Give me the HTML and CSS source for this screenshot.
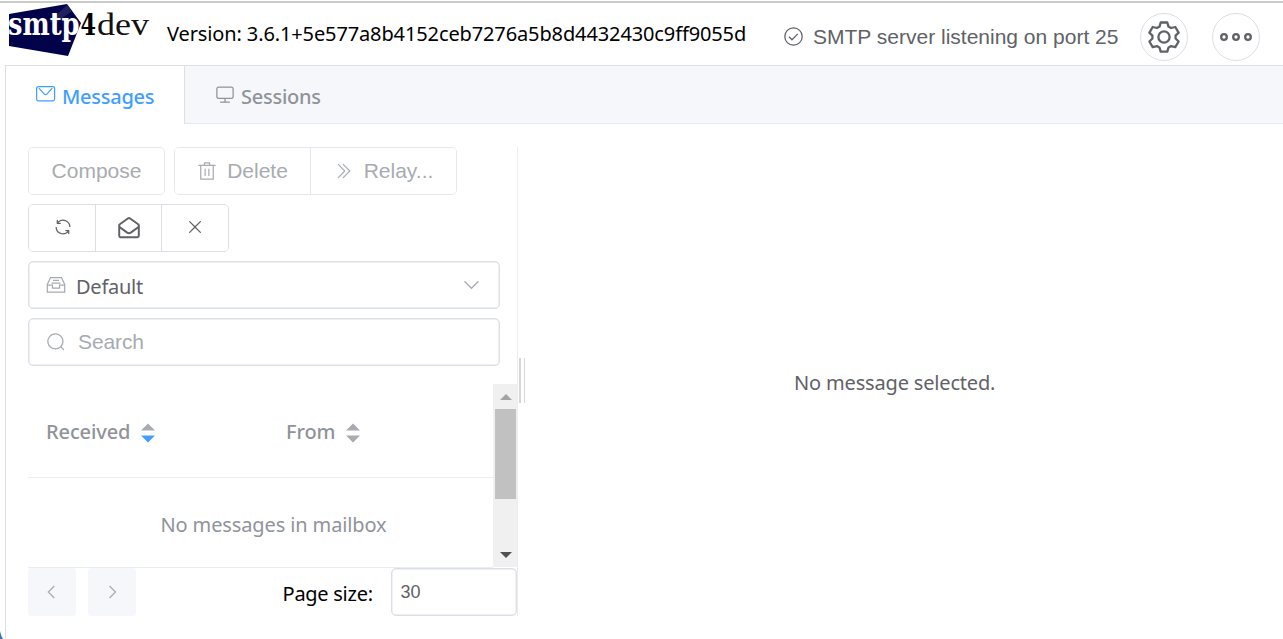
FILE: index.html
```html
<!DOCTYPE html>
<html lang="en">
<head>
<meta charset="utf-8">
<title>smtp4dev</title>
<link rel="stylesheet" href="styles.css">
</head>
<body>
<div class="app">
  <header class="header">
    <svg class="logo" viewBox="0 0 142 54" role="img" aria-label="smtp4dev">
      <path fill="#02024a" d="M1 10 59 0 73 19 60 52 1 42z"/>
      <path fill="#20205f" d="M41 18 59 1 64 7 49 18z"/>
      <text class="logo-smtp" x="0" y="30.500" textLength="71.500" lengthAdjust="spacingAndGlyphs">smtp</text>
      <text class="logo-four" x="72.500" y="30.500" textLength="15.500" lengthAdjust="spacingAndGlyphs">4</text>
      <text class="logo-dev" x="89" y="30.500" textLength="52" lengthAdjust="spacingAndGlyphs">dev</text>
    </svg>
    <span class="version"><span class="t-version">Version: 3.6.1+5e577a8b4152ceb7276a5b8d4432430c9ff9055d</span></span>
    <div class="status">
      <svg class="ic20" viewBox="0 0 20 20"><circle cx="9.500" cy="9.500" r="8.700"/><path d="m5 9.800 3 3 5.800-5.900"/></svg>
      <span>SMTP server listening on port 25</span>
    </div>
    <button class="round settings" aria-label="Settings">
      <svg width="32" height="32" viewBox="0 0 32 32"><path stroke-linejoin="round" d="M12.700 1.500h6.600l1.100 3.900 2.700 1.600 4.200-1 3.300 5.600-3 3v2.900l3 3-3.300 5.600-4.200-1-2.700 1.600-1.100 3.900h-6.600l-1.100-3.900-2.700-1.600-4.200 1-3.300-5.600 3-3v-2.900l-3-3L4.700 6l4.200 1 2.700-1.600z"/><circle cx="16" cy="16" r="5.600"/></svg>
    </button>
    <button class="round" aria-label="More">
      <svg width="34" height="12" viewBox="0 0 34 12"><circle cx="5" cy="6" r="2.800"/><circle cx="17" cy="6" r="2.800"/><circle cx="29" cy="6" r="2.800"/></svg>
    </button>
  </header>
  <main class="panel">
    <nav class="tabs">
      <div class="tab active">
        <svg class="ic20" viewBox="0 0 20 20"><rect x=".6" y="2.600" width="18" height="14.200" rx="1.800"/><path d="m2.900 4.200 5.200 5.700q1.500 1.500 3 0l5.200-5.700"/></svg>
        <span class="t-messages">Messages</span>
      </div>
      <div class="tab">
        <svg class="ic20 solid" viewBox="0 0 1024 1024"><path d="M544 768v128h192a32 32 0 1 1 0 64H288a32 32 0 1 1 0-64h192V768H192A128 128 0 0 1 64 640V256a128 128 0 0 1 128-128h640a128 128 0 0 1 128 128v384a128 128 0 0 1-128 128H544zM192 192a64 64 0 0 0-64 64v384a64 64 0 0 0 64 64h640a64 64 0 0 0 64-64V256a64 64 0 0 0-64-64H192z"/></svg>
        <span class="t-sessions">Sessions</span>
      </div>
    </nav>
    <div class="split">
      <section class="list-pane">
        <div class="toolbar">
          <div class="group disabled"><button class="btn compose">Compose</button></div>
          <div class="group disabled">
            <button class="btn delete"><svg class="ic20 solid" viewBox="0 0 1024 1024"><path d="M160 256H96a32 32 0 0 1 0-64h256V95.936a32 32 0 0 1 32-32h256a32 32 0 0 1 32 32V192h256a32 32 0 1 1 0 64h-64v672a32 32 0 0 1-32 32H192a32 32 0 0 1-32-32V256zm448-64v-64H416v64h192zM224 896h576V256H224v640zm192-128a32 32 0 0 1-32-32V416a32 32 0 0 1 64 0v320a32 32 0 0 1-32 32zm192 0a32 32 0 0 1-32-32V416a32 32 0 0 1 64 0v320a32 32 0 0 1-32 32z"/></svg><span>Delete</span></button>
            <button class="btn relay"><svg class="ic20 solid" viewBox="0 0 1024 1024"><path d="M452.864 149.312a29.12 29.12 0 0 1 41.728.064L826.24 489.664a32 32 0 0 1 0 44.672L494.592 874.624a29.12 29.12 0 0 1-41.728 0 30.592 30.592 0 0 1 0-42.752L764.736 512 452.864 192a30.592 30.592 0 0 1 0-42.688zm-256 0a29.12 29.12 0 0 1 41.728.064L570.24 489.664a32 32 0 0 1 0 44.672L238.592 874.624a29.12 29.12 0 0 1-41.728 0 30.592 30.592 0 0 1 0-42.752L508.736 512 196.864 192a30.592 30.592 0 0 1 0-42.688z"/></svg><span>Relay...</span></button>
          </div>
        </div>
        <div class="toolbar">
          <div class="group">
            <button class="btn tool" aria-label="Refresh"><svg class="ic20 solid" viewBox="0 0 1024 1024"><path d="M771.776 794.88A384 384 0 0 1 128 512h64a320 320 0 0 0 555.712 216.448H654.72a32 32 0 1 1 0-64h149.056a32 32 0 0 1 32 32v148.928a32 32 0 1 1-64 0v-50.56zM276.288 295.616h92.992a32 32 0 0 1 0 64H220.16a32 32 0 0 1-32-32V178.56a32 32 0 0 1 64 0v50.56A384 384 0 0 1 896.128 512h-64a320 320 0 0 0-555.776-216.384z"/></svg></button>
            <button class="btn tool" aria-label="Mark all read"><svg class="open-mail" viewBox="0 0 22 22"><path d="M1.200 8.500v10.300q0 1.400 1.400 1.400h16.800q1.400 0 1.400-1.400V8.500q0-.8-.6-1.200L11.800 1.300q-.8-.5-1.600 0L1.800 7.300q-.6.400-.6 1.200z"/><path d="m1.500 10 7.700 5.600q1.800 1.200 3.600 0L20.500 10"/></svg></button>
            <button class="btn tool" aria-label="Clear"><svg class="ic20 solid" viewBox="0 0 1024 1024"><path d="M764.288 214.592 512 466.88 259.712 214.592a31.936 31.936 0 0 0-45.12 45.12L466.752 512 214.528 764.224a31.936 31.936 0 1 0 45.12 45.184L512 557.184l252.288 252.288a31.936 31.936 0 0 0 45.12-45.12L557.12 512.064l252.288-252.352a31.936 31.936 0 1 0-45.12-45.184z"/></svg></button>
          </div>
        </div>
        <div class="field select">
          <svg class="ic20" viewBox="0 0 20 20"><path d="M1.300 9.500 4.500 2.500h11l3.200 7v7.700H1.300zM1.300 10h5.200v3.200h7V10h5.200M7 5.300h6M5.500 8h9"/></svg>
          <span class="t-default">Default</span>
          <svg class="chevron" viewBox="0 0 20 20"><path d="m2.500 6.300 7 7 7-7"/></svg>
        </div>
        <div class="field search">
          <svg class="ic20 solid" viewBox="0 0 1024 1024"><path d="m795.904 750.72 124.992 124.928a32 32 0 0 1-45.248 45.248L750.656 795.904a416 416 0 1 1 45.248-45.248zM480 832a352 352 0 1 0 0-704 352 352 0 0 0 0 704z"/></svg>
          <span>Search</span>
        </div>
        <div class="table-wrap">
          <div class="table">
            <div class="thead">
              <div class="th received"><span class="t-received">Received</span><svg class="sort" viewBox="0 0 14 20"><path d="M0 7.500 7 .5l7 7z"/><path class="on" d="m0 12.500 7 7 7-7z"/></svg></div>
              <div class="th"><span class="t-from">From</span><svg class="sort" viewBox="0 0 14 20"><path d="M0 7.500 7 .5l7 7zM0 12.500l7 7 7-7z"/></svg></div>
            </div>
            <div class="empty"><span class="t-empty">No messages in mailbox</span></div>
          </div>
          <div class="scrollbar">
            <svg class="arrow" viewBox="0 0 12 6"><path fill="#a3a3a3" d="m0 6 6-6 6 6z"/></svg>
            <div class="thumb"></div>
            <svg class="arrow down" viewBox="0 0 12 6"><path fill="#505050" d="m0 0 6 6 6-6z"/></svg>
          </div>
        </div>
        <footer class="pager">
          <button class="page" aria-label="Previous"><svg class="ic20" viewBox="0 0 20 20"><path d="m12.300 4-6 6 6 6"/></svg></button>
          <button class="page" aria-label="Next"><svg class="ic20" viewBox="0 0 20 20"><path d="m7.500 4 6 6-6 6"/></svg></button>
          <span class="label"><span class="t-page">Page size:</span></span>
          <div class="size">30</div>
        </footer>
      </section>
      <div class="splitter"></div>
      <section class="detail"><span class="t-none">No message selected.</span></section>
    </div>
  </main>
  <svg class="corner" viewBox="0 0 3 8"><path fill="#3b74b5" d="M0 0q1 5 3 8H0z"/></svg>
</div>
</body>
</html>
```
FILE: styles.css
```css
* { box-sizing: border-box; }
body {
  margin: 0;
  background: #fff;
  font-family: "Noto Sans", "Open Sans", sans-serif;
  font-size: 20px;
  letter-spacing: -.12px;
  color: #000;
}
button { font: inherit; color: inherit; margin: 0; padding: 0; background: #fff; }
svg { display: block; flex: none; fill: none; stroke: currentColor; stroke-width: 1.25; }
span { white-space: nowrap; }
.app { position: relative; height: 639px; overflow: hidden; padding-top: 1px; }
.ic20 { width: 20px; height: 20px; }
.solid { fill: currentColor; stroke: none; }

.header { display: flex; align-items: flex-start; height: 64px; border-top: 2px solid #c9cccb; padding-left: 8px; }
.logo { width: 142px; height: 54px; margin-top: 1px; stroke: none; overflow: visible; letter-spacing: 0; }
.logo-smtp { font: bold 32px "DejaVu Serif", serif; fill: #fff; }
.logo-four { font: bold 30px "DejaVu Serif", serif; fill: #000; }
.logo-dev { font: 32px "Liberation Serif", serif; fill: #111; }
.version { width: 580px; margin: 16px 0 0 17px; line-height: 30px; }
.status { display: flex; align-items: center; gap: 9px; width: 357px; height: 30px; margin: 19px 0 0 37px; color: #606266; font: 21px "Liberation Sans", sans-serif; letter-spacing: 0; }
.round { display: grid; place-items: center; width: 48px; height: 48px; margin-top: 10px; margin-left: 24px; border: 1px solid #dcdfe6; border-radius: 50%; color: #606266; }
.round svg { stroke-width: 2.300; }
.settings { margin-left: -1px; }

.panel { margin-left: 5px; border-left: 1px solid #dcdfe6; border-top: 1px solid #dcdfe6; height: 574px; }
.tabs { display: flex; height: 58px; background: #f5f7fa; border-bottom: 1px solid #e4e7ed; color: #909399; font-weight: 500; letter-spacing: -.25px; }
.tab { display: flex; align-items: center; gap: 6px; height: 58px; width: 180px; padding-left: 30px; }
.tab svg { margin-top: -3px; }
.tab span { padding-top: 3px; }
.tab.active { width: 179px; background: #fff; border-right: 1px solid #dcdfe6; color: #409eff; }

.split { display: flex; padding: 23px 0 0 22px; }
.list-pane { width: 490px; height: 469px; border-right: 1px solid #ebeef0; display: flex; flex-direction: column; }
.toolbar { display: flex; gap: 9px; height: 48px; margin-bottom: 9px; }
.group { display: flex; border: 1px solid #dcdfe6; border-radius: 5px; overflow: hidden; color: #606266; }
.disabled { border-color: #e4e7ed; color: #a8abb2; }
.btn { display: flex; align-items: center; justify-content: center; border: 0; font: 21px "Liberation Sans", sans-serif; letter-spacing: 0; }
.btn + .btn { border-left: 1px solid #dcdfe6; }
.disabled .btn + .btn { border-color: #e4e7ed; }
.compose { width: 135px; }
.delete { width: 135px; gap: 10px; }
.relay { width: 146px; gap: 10px; }
.tool { width: 66px; }
.tool:nth-child(1) { padding-left: 1px; }
.tool:nth-child(3) { width: 67px; }
.tool .solid { margin-top: -2px; }
.open-mail { width: 22px; height: 22px; stroke-width: 2; }
.field { display: flex; align-items: center; width: 472px; height: 48px; margin-bottom: 9px; border: 1px solid #dcdfe6; border-radius: 5px; box-shadow: inset 0 0 0 .4px #dcdfe6; padding: 0 17px; color: #a8abb2; }
.select { gap: 10px; letter-spacing: -.25px; }
.select span { color: #606266; padding-top: 3px; }
.select .chevron { width: 20px; height: 20px; margin-left: auto; }
.search { gap: 12px; font: 21px "Liberation Sans", sans-serif; letter-spacing: -.1px; }
.search svg { margin-top: -1px; }

.table-wrap { display: flex; height: 184px; margin-top: 9px; }
.table { width: 465px; border-bottom: 1px solid #ebeef5; color: #909399; }
.thead { display: flex; height: 94px; border-bottom: 1px solid #ebeef0; font-weight: 500; }
.th { display: flex; align-items: center; gap: 11px; padding: 2px 0 0 18px; }
.received { width: 240px; }
.sort { width: 14px; height: 20px; margin-top: 2px; stroke: none; fill: #a8abb2; }
.sort .on { fill: #409eff; }
.empty { display: flex; justify-content: center; padding: 32px 0 0 26px; line-height: 30px; }
.scrollbar { display: flex; flex-direction: column; align-items: center; width: 24px; height: 183px; padding: 10px 0 9px 1px; background: #f0f0f0; }
.arrow { width: 12px; height: 6px; stroke: none; }
.down { margin-top: auto; }
.thumb { width: 21px; height: 90px; margin-top: 9px; background: #c1c1c1; }
.pager { display: flex; align-items: center; height: 48px; }
.page { display: grid; place-items: center; width: 48px; height: 48px; margin-right: 12px; border: 0; border-radius: 3px; background: #f5f7fa; color: #a8abb2; }
.label { width: 90px; margin-left: 135px; padding-top: 3px; letter-spacing: -.27px; }
.size { width: 127px; height: 48px; margin-left: 18px; border: 1px solid #dcdfe6; border-radius: 5px; box-shadow: inset 0 0 0 .4px #dcdfe6; padding-left: 9px; line-height: 46px; color: #606266; font-family: "Liberation Sans", sans-serif; font-size: 18px; letter-spacing: 0; }
.splitter { width: 6px; height: 45px; margin: 211px 0 0 1px; border-left: 2px solid #d6d6d6; border-right: 1px solid #d6d6d6; }
.detail { flex: 1; padding: 221px 0 0 269px; line-height: 30px; letter-spacing: -.17px; color: #606266; }
.corner { position: absolute; left: 0; bottom: 0; width: 3px; height: 8px; stroke: none; }
```
